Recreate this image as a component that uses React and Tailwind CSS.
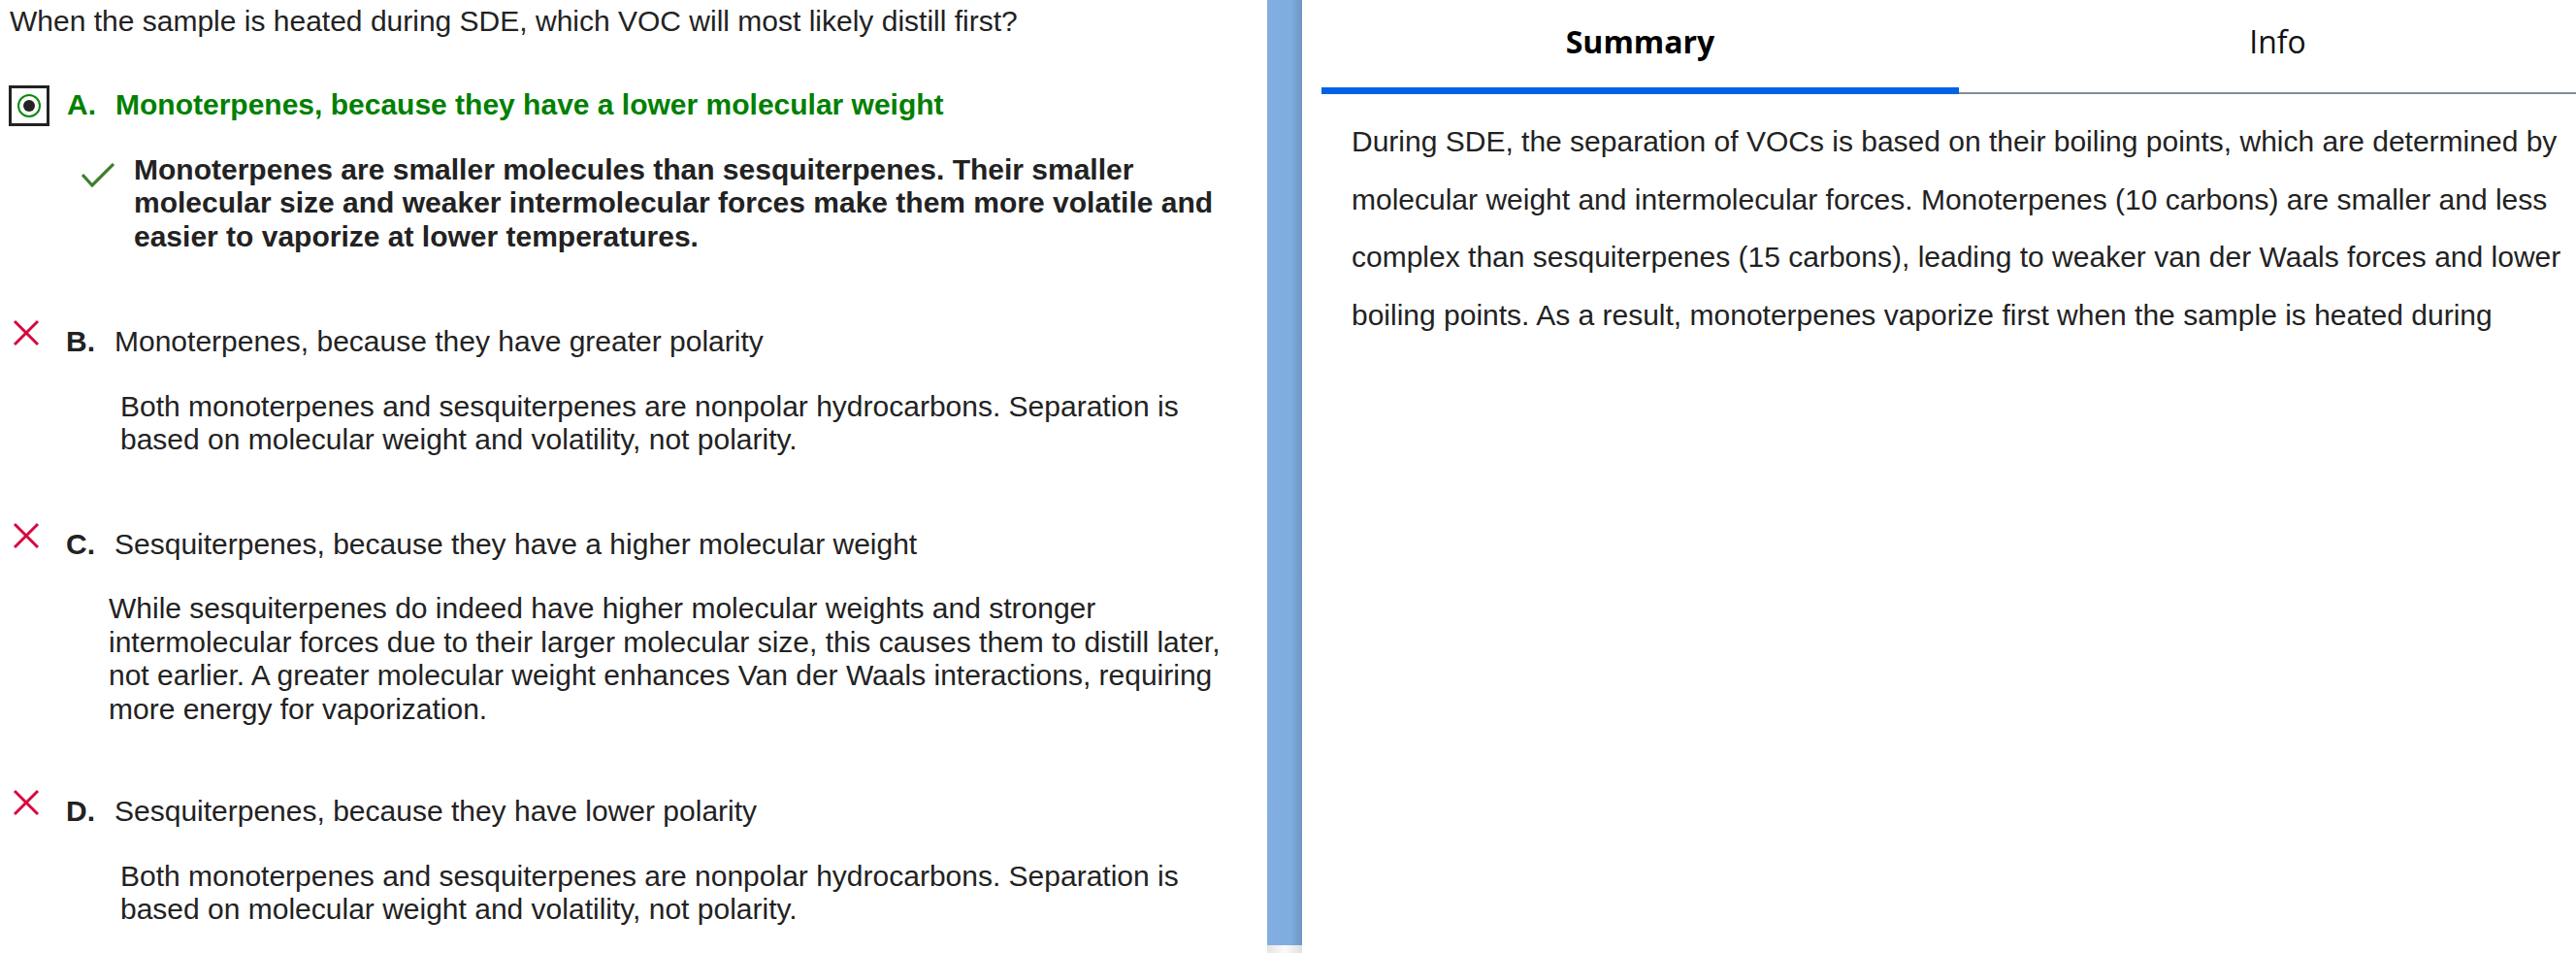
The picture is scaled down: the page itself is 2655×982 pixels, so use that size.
import React from 'react';

const options = [
  {
    letter: 'B.',
    text: 'Monoterpenes, because they have greater polarity',
    feedback:
      'Both monoterpenes and sesquiterpenes are nonpolar hydrocarbons. Separation is based on molecular weight and volatility, not polarity.',
    indent: 'pl-[115px]',
    gap: 'mt-[74px]',
  },
  {
    letter: 'C.',
    text: 'Sesquiterpenes, because they have a higher molecular weight',
    feedback:
      'While sesquiterpenes do indeed have higher molecular weights and stronger intermolecular forces due to their larger molecular size, this causes them to distill later, not earlier. A greater molecular weight enhances Van der Waals interactions, requiring more energy for vaporization.',
    indent: 'pl-[103px]',
    gap: 'mt-[73px]',
  },
  {
    letter: 'D.',
    text: 'Sesquiterpenes, because they have lower polarity',
    feedback:
      'Both monoterpenes and sesquiterpenes are nonpolar hydrocarbons. Separation is based on molecular weight and volatility, not polarity.',
    indent: 'pl-[115px]',
    gap: 'mt-[71px]',
  },
];

function CrossIcon() {
  return (
    <svg width="28" height="28" viewBox="0 0 28 28" className="ml-[4px] -mt-[6px] shrink-0">
      <line x1="2" y1="2" x2="26" y2="26" stroke="#d6073f" strokeWidth="3" />
      <line x1="26" y1="2" x2="2" y2="26" stroke="#d6073f" strokeWidth="3" />
    </svg>
  );
}

function CheckIcon() {
  return (
    <svg width="34" height="25" viewBox="0 0 34 25" className="mt-[10px] shrink-0">
      <polyline points="1,12 11,23 33,1" fill="none" stroke="#3c7f2d" strokeWidth="3.2" />
    </svg>
  );
}

function WrongOption({ option }) {
  return (
    <div className={option.gap}>
      <div className="flex items-start">
        <div className="w-[59px] shrink-0 flex">
          <CrossIcon />
        </div>
        <span className="w-[50px] shrink-0 font-bold">{option.letter}</span>
        <span>{option.text}</span>
      </div>
      <p className={`mt-[32px] ${option.indent}`}>{option.feedback}</p>
    </div>
  );
}

export default function App() {
  return (
    <div className="flex w-screen h-screen overflow-hidden bg-white">
      <div className="w-[1306px] shrink-0 pl-[9px] pr-[26px] text-[30px] leading-[34.5px] text-[#222] font-['Liberation_Sans',Arial,sans-serif]">
        <p className="pt-[5px] pl-[1px]">
          When the sample is heated during SDE, which VOC will most likely distill first?
        </p>

        <div className="mt-[48px] flex items-center">
          <div className="w-[60px] shrink-0">
            <div className="w-[42px] h-[42px] border-[3px] border-[#222] flex items-center justify-center">
              <div className="w-[24px] h-[24px] rounded-full border-[2.5px] border-[#0a8a0a] flex items-center justify-center">
                <div className="w-[12px] h-[12px] rounded-full bg-[#222]" />
              </div>
            </div>
          </div>
          <span className="w-[50px] shrink-0 font-bold text-[#008000]">A.</span>
          <span className="font-bold text-[#008000]">
            Monoterpenes, because they have a lower molecular weight
          </span>
        </div>

        <div className="mt-[28px] flex items-start pl-[75px] gap-[20px]">
          <CheckIcon />
          <p className="font-bold">
            Monoterpenes are smaller molecules than sesquiterpenes. Their smaller molecular size and weaker
            intermolecular forces make them more volatile and easier to vaporize at lower temperatures.
          </p>
        </div>

        {options.map((o) => (
          <WrongOption key={o.letter} option={o} />
        ))}
      </div>

      <div className="w-[36px] shrink-0 flex flex-col">
        <div className="flex-1 bg-[linear-gradient(to_right,#82afe1_0%,#80ade0_65%,#6f96c5_100%)]" />
        <div className="h-[8px] bg-[linear-gradient(to_right,#e4e4e4_0%,#fafafa_50%,#e0e0e0_100%)]" />
      </div>

      <div className="w-[1334px] shrink-0 pl-[20px]">
        <div className="w-[1314px] grid grid-cols-2 font-['Open_Sans',sans-serif] text-[32px]">
          <div className="h-[97px] flex flex-col">
            <div className="h-[86px] flex items-center justify-center font-bold text-black">Summary</div>
            <div className="mt-auto h-[7px] bg-[#0062e6]" />
          </div>
          <div className="h-[97px] flex flex-col">
            <div className="h-[86px] flex items-center justify-center text-[#111]">Info</div>
            <div className="mt-auto h-[2px] bg-[#868d94]" />
          </div>
        </div>
        <p className="ml-[31px] w-[1300px] pt-[19px] text-[30px] leading-[59.5px] text-[#222] font-['Liberation_Sans',Arial,sans-serif]">
          During SDE, the separation of VOCs is based on their boiling points, which are determined by
          molecular weight and intermolecular forces. Monoterpenes (10 carbons) are smaller and less complex
          than sesquiterpenes (15 carbons), leading to weaker van der Waals forces and lower boiling points. As
          a result, monoterpenes vaporize first when the sample is heated during
        </p>
      </div>
    </div>
  );
}
